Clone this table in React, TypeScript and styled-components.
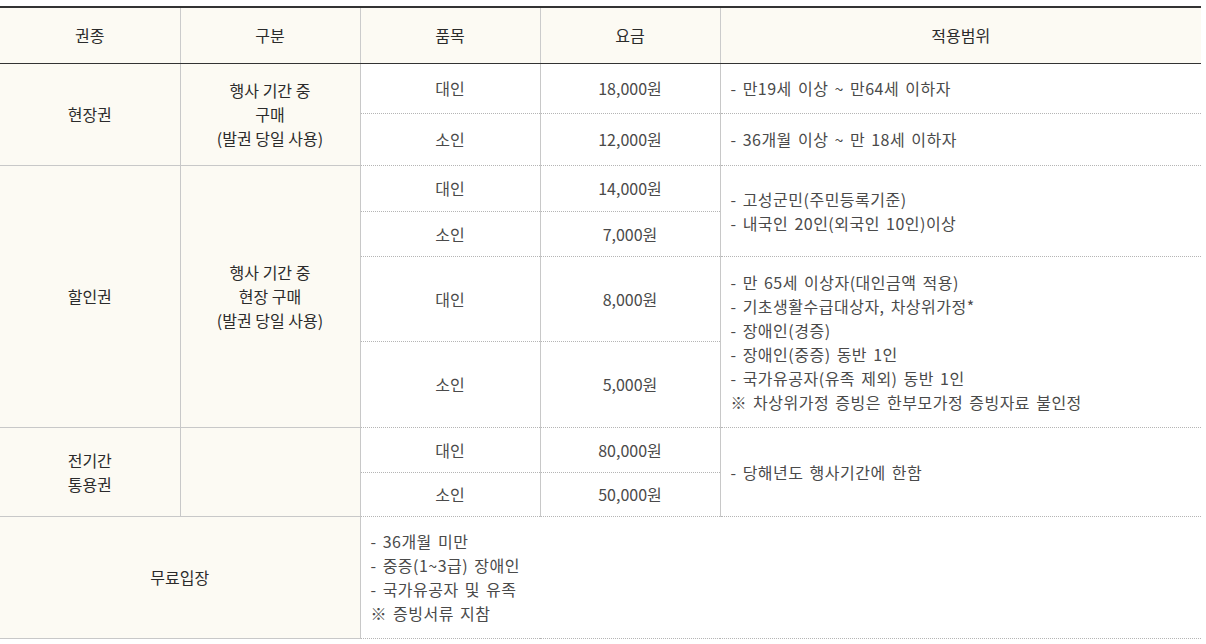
import React from 'react';
import styled, { createGlobalStyle } from 'styled-components';

const Global = createGlobalStyle`
  html, body { margin: 0; padding: 0; background: #fff; }
  body { font-family: "Noto Sans CJK KR", "Noto Sans", sans-serif; }
`;

const Wrap = styled.div`
  padding-top: 6px;
  width: 1201px;
`;

const Table = styled.table`
  width: 1201px;
  border-collapse: collapse;
  table-layout: fixed;
  border-top: 2px solid #333;
  font-size: 16px;
  line-height: 24px;
  color: #4a4a4a;
`;

const Row = styled.tr<{ $h: number }>`
  height: ${(p) => p.$h}px;
`;

const Th = styled.th`
  background: #fcfaf3;
  border-bottom: 1px solid #333;
  border-left: 1px solid #cbcbcb;
  font-weight: 400;
  color: #2b2b2b;
  padding: 0 10px;
  &:first-child { border-left: 0; }
`;

const Label = styled.td`
  background: #fcfaf3;
  border: 1px solid #c8c8c8;
  border-left: 0;
  color: #2b2b2b;
  text-align: center;
  vertical-align: middle;
  padding: 0 10px;
  & + & { border-left: 1px solid #c8c8c8; }
`;

const Cell = styled.td<{ $left?: boolean }>`
  border-bottom: 1px dotted #b5b5b5;
  border-left: 1px solid #c8c8c8;
  text-align: ${(p) => (p.$left ? 'left' : 'center')};
  letter-spacing: ${(p) => (p.$left ? '0.5px' : '0')};
  word-spacing: ${(p) => (p.$left ? '2px' : '0')};
  vertical-align: middle;
  padding: 0 10px;
`;

const Line = styled.div``;

const Lines = ({ items }: { items: string[] }) => (
  <>
    {items.map((t) => (
      <Line key={t}>{t}</Line>
    ))}
  </>
);

export default function App() {
  return (
    <Wrap>
      <Global />
      <Table>
        <colgroup>
          <col style={{ width: 180 }} />
          <col style={{ width: 180 }} />
          <col style={{ width: 180 }} />
          <col style={{ width: 180 }} />
          <col />
        </colgroup>
        <thead>
          <Row $h={56}>
            <Th>권종</Th>
            <Th>구분</Th>
            <Th>품목</Th>
            <Th>요금</Th>
            <Th>적용범위</Th>
          </Row>
        </thead>
        <tbody>
          <Row $h={50}>
            <Label rowSpan={2}>현장권</Label>
            <Label rowSpan={2}>
              <Lines items={['행사 기간 중', '구매', '(발권 당일 사용)']} />
            </Label>
            <Cell>대인</Cell>
            <Cell>18,000원</Cell>
            <Cell $left>- 만19세 이상 ~ 만64세 이하자</Cell>
          </Row>
          <Row $h={52}>
            <Cell>소인</Cell>
            <Cell>12,000원</Cell>
            <Cell $left>- 36개월 이상 ~ 만 18세 이하자</Cell>
          </Row>
          <Row $h={46}>
            <Label rowSpan={4}>할인권</Label>
            <Label rowSpan={4}>
              <Lines items={['행사 기간 중', '현장 구매', '(발권 당일 사용)']} />
            </Label>
            <Cell>대인</Cell>
            <Cell>14,000원</Cell>
            <Cell $left rowSpan={2}>
              <Lines items={['- 고성군민(주민등록기준)', '- 내국인 20인(외국인 10인)이상']} />
            </Cell>
          </Row>
          <Row $h={45}>
            <Cell>소인</Cell>
            <Cell>7,000원</Cell>
          </Row>
          <Row $h={85}>
            <Cell>대인</Cell>
            <Cell>8,000원</Cell>
            <Cell $left rowSpan={2}>
              <Lines
                items={[
                  '- 만 65세 이상자(대인금액 적용)',
                  '- 기초생활수급대상자, 차상위가정*',
                  '- 장애인(경증)',
                  '- 장애인(중증) 동반 1인',
                  '- 국가유공자(유족 제외) 동반 1인',
                  '※ 차상위가정 증빙은 한부모가정 증빙자료 불인정',
                ]}
              />
            </Cell>
          </Row>
          <Row $h={86}>
            <Cell>소인</Cell>
            <Cell>5,000원</Cell>
          </Row>
          <Row $h={45}>
            <Label rowSpan={2}>
              <Lines items={['전기간', '통용권']} />
            </Label>
            <Label rowSpan={2} />
            <Cell>대인</Cell>
            <Cell>80,000원</Cell>
            <Cell $left rowSpan={2}>- 당해년도 행사기간에 한함</Cell>
          </Row>
          <Row $h={44}>
            <Cell>소인</Cell>
            <Cell>50,000원</Cell>
          </Row>
          <Row $h={122}>
            <Label colSpan={2}>무료입장</Label>
            <Cell $left colSpan={3}>
              <Lines
                items={['- 36개월 미만', '- 중증(1~3급) 장애인', '- 국가유공자 및 유족', '※ 증빙서류 지참']}
              />
            </Cell>
          </Row>
        </tbody>
      </Table>
    </Wrap>
  );
}
